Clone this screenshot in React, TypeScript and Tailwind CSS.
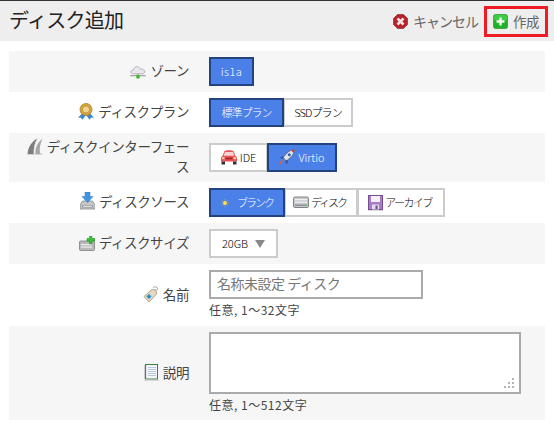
import type { ReactNode } from 'react';

function CloudIcon() {
    return (
        <svg width="16" height="15" viewBox="0 0 17 16">
            <path d="M0 12.500h17" stroke="#8a8a8a" strokeWidth="1" />
            <path d="M3.500 10.500C1.500 10.500 .5 9 .9 7.800 1.300 6.700 2.600 6.300 3.500 6.500 4 4 5.800 2.500 7.800 2.800 9.500 3 10.800 4.300 11 5.600 12 5 14 5.300 15 6.500 16.200 8 15.500 10.500 13.500 10.500Z" fill="#e8e8ec" stroke="#a4a4a8" strokeWidth=".8" />
            <path d="M8.500 10.500v2" stroke="#888" strokeWidth="1" />
            <circle cx="8.500" cy="13.500" r="2.100" fill="#45bb35" />
        </svg>
    );
}

function MedalIcon() {
    return (
        <svg width="16" height="17" viewBox="0 0 16 17">
            <path d="M4.500 10L0 14.500l3 .2L4.500 16.800l3.500-4.800Z" fill="#3f88d0" />
            <path d="M11.500 10L16 14.500l-3 .2-1.500 2.100L8 12Z" fill="#3f88d0" />
            <circle cx="8" cy="6.500" r="6" fill="#d9a53e" stroke="#a97c28" strokeWidth=".8" />
            <circle cx="8" cy="6.500" r="3.600" fill="#efd48a" stroke="#b98d34" strokeWidth=".8" />
        </svg>
    );
}

function RoadIcon() {
    return (
        <svg width="16" height="17" viewBox="0 0 16 17">
            <path d="M.5 16C1 9 5 3 10.500 .5 7.500 5 6.500 10 7 16Z" fill="#7e7e7e" />
            <path d="M7 16C6.800 10 8 5 10.500 .5" stroke="#dcdcdc" strokeWidth=".8" fill="none" />
            <path d="M8.500 16C8 10 10.500 4 15.500 1 13 6 12.300 11 13 15 13.800 16 15.500 16 15.500 16Z" fill="#a6a6a6" />
            <path d="M.5 16.500h15" stroke="#d4d4d4" />
        </svg>
    );
}

function DiskShape({ y = 0 }: { y?: number }) {
    return (
        <g transform={`translate(0 ${y})`}>
            <path d="M2.500 0h10L15 4v4H0V4Z" fill="#c4c6c8" stroke="#85888a" strokeWidth=".8" />
            <path d="M2 4.500h11v2H2Z" fill="#8a8d90" />
            <rect x="3" y="5" width="9" height=".9" fill="#eee" />
        </g>
    );
}

function DownloadIcon() {
    return (
        <svg width="15" height="18" viewBox="0 0 15 18">
            <DiskShape y={9} />
            <path d="M5 0h5v4.500h3L7.500 10.500 2 4.500h3Z" fill="#3f97e4" stroke="#2b70b8" strokeWidth=".5" />
        </svg>
    );
}

function DiskPlusIcon() {
    return (
        <svg width="16" height="15" viewBox="0 0 16 15">
            <rect x=".5" y="5" width="15" height="9.500" rx="1" fill="#b6b8ba" stroke="#7d8082" strokeWidth=".8" />
            <rect x="2" y="8" width="11" height="1.200" fill="#eee" />
            <rect x="2" y="10.500" width="11" height="1.200" fill="#eee" />
            <path d="M10.500 0h2.500v2.500H16v2.500h-3V8h-2.500V5H8V2.500h2.500Z" fill="#39c232" stroke="#218a1e" strokeWidth=".5" />
        </svg>
    );
}

function TagIcon() {
    return (
        <svg width="16" height="17" viewBox="0 0 16 17">
            <path d="M10 1.500c2-1.500 4.500-.5 4.500 1S12.500 5 11.500 5" stroke="#a89880" strokeWidth=".9" fill="none" />
            <path d="M1 10.500L9 3.500l4 .5.500 4L6 16Z" fill="#e6d9c4" stroke="#a4906f" strokeWidth=".8" />
            <path d="M3.500 10.500l2.500-2.500 2.500 2.500L6 13Z" fill="#1e90d8" />
        </svg>
    );
}

function NotebookIcon() {
    return (
        <svg width="15" height="17" viewBox="0 0 15 17">
            <rect x="1.500" y=".5" width="12" height="14.500" fill="#f2f6fb" stroke="#3f7d3f" />
            <path d="M4 3.500h8M4 5.500h8M4 7.500h8M4 9.500h8M4 11.500h8" stroke="#a9bdd4" strokeWidth=".8" />
            <path d="M0 2h2.500M0 4h2.500M0 6h2.500M0 8h2.500M0 10h2.500M0 12h2.500M0 14h2.500" stroke="#8a8a8a" strokeWidth=".8" />
            <path d="M0 16.300h15" stroke="#cfcfcf" />
        </svg>
    );
}

function CarIcon() {
    return (
        <svg width="16" height="15" viewBox="0 0 16 15">
            <path d="M3.500 1C5 0 11 0 12.500 1L14.500 6C15.500 6.500 16 7.500 16 8.500v3H0v-3C0 7.500 .5 6.500 1.500 6Z" fill="#ea5058" />
            <path d="M4 2h8l1.300 3.800H2.700Z" fill="#f6d4d0" />
            <path d="M4.500 8.500h7" stroke="#a02028" strokeWidth="1.600" />
            <rect x="1.200" y="7.300" width="2.300" height="1.800" fill="#ffe9a8" />
            <rect x="12.500" y="7.300" width="2.300" height="1.800" fill="#ffe9a8" />
            <rect x=".5" y="11.500" width="3.500" height="3" fill="#333" />
            <rect x="12" y="11.500" width="3.500" height="3" fill="#333" />
        </svg>
    );
}

function RocketIcon() {
    return (
        <svg width="16" height="17" viewBox="0 0 16 17">
            <path d="M15.500 .5c-3 .3-5.500 1.500-7.500 3.500L4 8.500 7.500 12l4.500-4C14 6 15.200 3.500 15.500 .5Z" fill="#dfe3ea" stroke="#5a6274" strokeWidth=".8" />
            <path d="M15.500 .5l-3.500 .9 2.500 2.500Z" fill="#d83a3a" />
            <circle cx="10.300" cy="5.700" r="1.500" fill="#2f5fb0" />
            <path d="M5 7L.8 8.500 3.800 10ZM9 11l-1 4.500L6 12Z" fill="#2e4f90" />
            <path d="M4.500 11.500L.5 16.500l1-4.500Z" fill="#d9644a" />
        </svg>
    );
}

function StarIcon() {
    return (
        <svg width="8" height="8" viewBox="0 0 9 9">
            <path d="M4.500 0v9M0 4.500h9M1.300 1.300l6.400 6.400M7.700 1.300L1.300 7.700" stroke="#b0a468" strokeWidth=".8" />
            <circle cx="4.500" cy="4.500" r="2.200" fill="#f8e04a" />
        </svg>
    );
}

function HardDiskIcon() {
    return (
        <svg width="16" height="13" viewBox="0 0 16 13">
            <rect x=".5" y="1" width="15" height="10.500" rx="1.500" fill="#c8cacc" stroke="#808386" />
            <rect x="2" y="3" width="12" height="1.200" fill="#f0f0f0" />
            <rect x="2" y="5.500" width="12" height="1.200" fill="#f0f0f0" />
            <rect x="2" y="8.500" width="12" height="1.500" fill="#8d9094" />
            <rect x="12.500" y="8.800" width="2" height="1" fill="#55d060" />
        </svg>
    );
}

function FloppyIcon() {
    return (
        <svg width="15" height="16" viewBox="0 0 15 16">
            <rect x=".5" y=".5" width="14" height="14" fill="#a77cc4" stroke="#754d94" />
            <rect x="3" y="1" width="9" height="6" fill="#f4f0f8" />
            <rect x="4" y="9.500" width="7" height="5" fill="#e2dcea" />
            <rect x="7.500" y="10.500" width="2" height="3.500" fill="#6a4a8a" />
            <path d="M0 15.500h15" stroke="#dddddd" />
        </svg>
    );
}

function CancelIcon() {
    return (
        <svg width="15" height="15" viewBox="0 0 15 15">
            <path d="M4.500 .5h6l4 4v6l-4 4h-6l-4-4v-6Z" fill="#b8202a" stroke="#8c1a20" strokeWidth=".6" />
            <path d="M4.500 4.500l6 6M10.500 4.500l-6 6" stroke="#f4e4e4" strokeWidth="2.600" />
        </svg>
    );
}

function PlusIcon() {
    return (
        <svg width="15" height="15" viewBox="0 0 15 15">
            <rect x=".5" y=".5" width="14" height="14" rx="2" fill="#22b02a" stroke="#178a1e" strokeWidth=".6" />
            <rect x="1" y="1" width="13" height="5.500" rx="1.500" fill="#3fcc44" />
            <path d="M7.500 3.500v8M3.500 7.500h8" stroke="#f2fbf0" strokeWidth="2.400" />
        </svg>
    );
}

function Row({ label, icon, shaded, height, children }: { label: ReactNode; icon: ReactNode; shaded?: boolean; height: string; children: ReactNode }) {
    return (
        <div className={`flex items-center ${height} ${shaded ? 'bg-[#f6f6f6]' : 'bg-white'}`}>
            <div className="w-[180px] pl-[14px] pb-[3px] text-right text-[13.5px] tracking-[-0.4px] leading-[20px] text-[#444444] shrink-0">
                <span className="inline-block align-[-3px] mr-[4px]">{icon}</span>
                {label}
            </div>
            <div className="ml-[20px] min-w-0">{children}</div>
        </div>
    );
}

function Btn({ active, className, gap, icon, children }: { active?: boolean; className: string; gap?: string; icon?: ReactNode; children: ReactNode }) {
    return (
        <div
            className={`${className} ${gap ?? 'gap-[3px]'} h-[29px] flex items-center justify-center border-2 font-light ${
                active ? 'relative z-10 bg-[#4a80e8] border-[#23437d] text-white' : 'bg-white border-[#cccccc] text-black'
            }`}
        >
            {icon}
            <span>{children}</span>
        </div>
    );
}

export default function App() {
    return (
        <div className="w-[554px] h-[430px] bg-white overflow-hidden font-['Noto_Sans_CJK_JP',sans-serif]">
            <div className="h-[41px] bg-[#eeeeee] border-t border-[#333333] flex items-center justify-between pl-[9px] pr-[6px]">
                <h1 className="text-[20px] tracking-[-0.7px] pb-[2px] text-[#222222] font-normal">ディスク追加</h1>
                <div className="flex items-center">
                    <div className="flex items-center gap-[5px] text-[14px] tracking-[-1px] text-[#666666] mr-[6px]">
                        <CancelIcon />
                        キャンセル
                    </div>
                    <div className="w-[64px] h-[31px] border-[3px] border-[#ed1c24] flex items-center justify-center gap-[5px] text-[13.5px] tracking-[-0.5px] text-[#666666]">
                        <PlusIcon />
                        作成
                    </div>
                </div>
            </div>

            <div className="mt-[10px] mx-[9px]">
                <Row shaded height="h-[41px]" label="ゾーン" icon={<CloudIcon />}>
                    <div className="flex">
                        <Btn active className="w-[45px] text-[11px] tracking-[0.5px]">is1a</Btn>
                    </div>
                </Row>
                <Row height="h-[41px]" label="ディスクプラン" icon={<MedalIcon />}>
                    <div className="flex">
                        <Btn active className="w-[75px] text-[11px] tracking-[-1px]">標準プラン</Btn>
                        <Btn className="w-[70px] -ml-[1px] text-[11px] tracking-[-0.9px]">SSDプラン</Btn>
                    </div>
                </Row>
                <Row shaded height="h-[49px]" label="ディスクインターフェース" icon={<RoadIcon />}>
                    <div className="flex">
                        <Btn className="w-[59px] text-[11px]" icon={<CarIcon />}>IDE</Btn>
                        <Btn active className="w-[70px] -ml-[1px] text-[11px]" icon={<RocketIcon />}>Virtio</Btn>
                    </div>
                </Row>
                <Row height="h-[41px]" label="ディスクソース" icon={<DownloadIcon />}>
                    <div className="flex">
                        <Btn active className="w-[76px] text-[11px] tracking-[-2px]" gap="gap-[8px]" icon={<StarIcon />}>ブランク</Btn>
                        <Btn className="w-[74px] -ml-[1px] pr-[3px] text-[11px] tracking-[-2px]" gap="gap-[2px]" icon={<HardDiskIcon />}>ディスク</Btn>
                        <Btn className="w-[88px] -ml-[1px] pr-[2px] text-[11px] tracking-[-1.600px]" gap="gap-[2px]" icon={<FloppyIcon />}>アーカイブ</Btn>
                    </div>
                </Row>
                <Row shaded height="h-[41px]" label="ディスクサイズ" icon={<DiskPlusIcon />}>
                    <div className="w-[69px] h-[29px] flex items-center justify-center gap-[7px] border-2 border-[#cccccc] bg-white text-[11px] font-light text-black">
                        20GB
                        <span className="w-0 h-0 border-x-[5px] border-x-transparent border-t-[8px] border-t-[#888888]" />
                    </div>
                </Row>
                <Row height="h-[62px]" label="名前" icon={<TagIcon />}>
                    <div className="pb-[2px]">
                        <div className="w-[214px] h-[29px] flex items-center border-2 border-[#aaaaaa] bg-white px-[6px] pb-[2px] text-[14px] tracking-[-0.5px] text-[#777777]">名称未設定 ディスク</div>
                        <p className="mt-[3px] text-[12px] leading-[16px] tracking-[0.5px] text-[#444444]">任意, 1～32文字</p>
                    </div>
                </Row>
                <Row shaded height="h-[94px]" label="説明" icon={<NotebookIcon />}>
                    <div className="pb-[2px]">
                        <div className="relative w-[312px] h-[62px] border-2 border-[#aaaaaa] bg-white">
                            <svg className="absolute right-[4px] bottom-[3px]" width="11" height="11" viewBox="0 0 11 11" fill="#b4b4b4">
                                <rect x="8" y="0" width="2" height="2" />
                                <rect x="4" y="4" width="2" height="2" />
                                <rect x="8" y="4" width="2" height="2" />
                                <rect x="0" y="8" width="2" height="2" />
                                <rect x="4" y="8" width="2" height="2" />
                                <rect x="8" y="8" width="2" height="2" />
                            </svg>
                        </div>
                        <p className="mt-[3px] text-[12px] leading-[16px] tracking-[0.5px] text-[#444444]">任意, 1～512文字</p>
                    </div>
                </Row>
            </div>
        </div>
    );
}
